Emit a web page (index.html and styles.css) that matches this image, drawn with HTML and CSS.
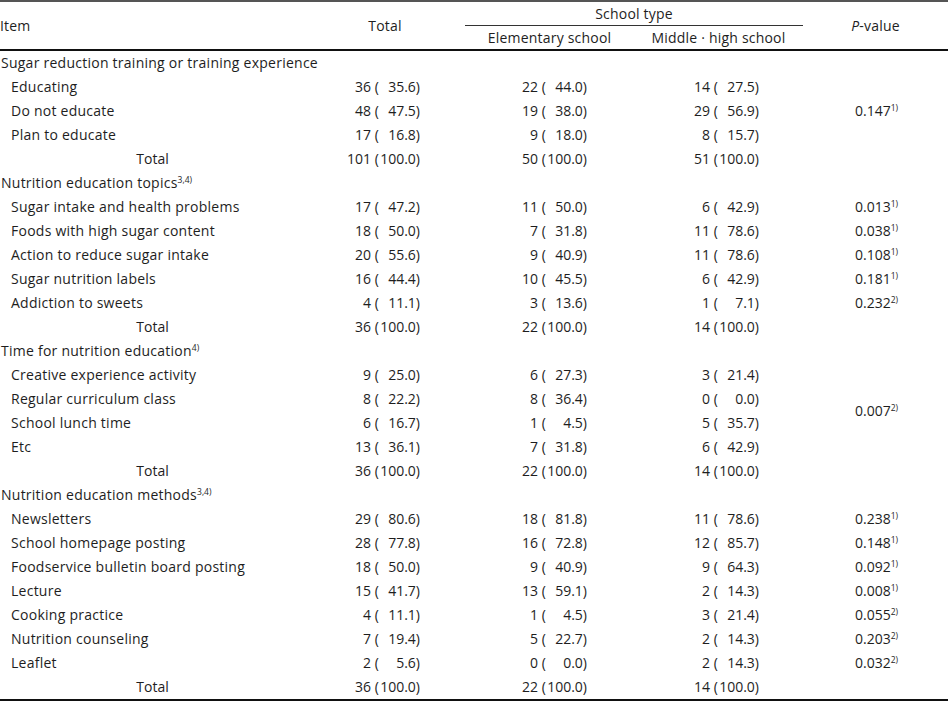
FILE: index.html
```html
<!DOCTYPE html>
<html>
<head>
<meta charset="utf-8">
<link rel="stylesheet" href="styles.css">
</head>
<body>
<table class="tbl">
  <colgroup>
    <col class="c-item"><col class="c-total"><col class="c-elem"><col class="c-mid"><col class="c-p">
  </colgroup>
  <thead>
    <tr class="h1">
      <th rowspan="2" class="th-item">Item</th>
      <th rowspan="2">Total</th>
      <th colspan="2" class="th-group"><span class="group-label">School type</span></th>
      <th rowspan="2"><i>P</i>-value</th>
    </tr>
    <tr class="h2">
      <th>Elementary school</th>
      <th>Middle · high school</th>
    </tr>
  </thead>
  <tbody>
    <tr><td class="sec" colspan="5">Sugar reduction training or training experience</td></tr>
    <tr><td class="it">Educating</td><td class="num">36 (<span class="p">35.6</span>)</td><td class="num">22 (<span class="p">44.0</span>)</td><td class="num">14 (<span class="p">27.5</span>)</td><td class="pv" rowspan="3">0.147<sup>1)</sup></td></tr>
    <tr><td class="it">Do not educate</td><td class="num">48 (<span class="p">47.5</span>)</td><td class="num">19 (<span class="p">38.0</span>)</td><td class="num">29 (<span class="p">56.9</span>)</td></tr>
    <tr><td class="it">Plan to educate</td><td class="num">17 (<span class="p">16.8</span>)</td><td class="num">9 (<span class="p">18.0</span>)</td><td class="num">8 (<span class="p">15.7</span>)</td></tr>
    <tr><td class="tot">Total</td><td class="num">101 (<span class="p">100.0</span>)</td><td class="num">50 (<span class="p">100.0</span>)</td><td class="num">51 (<span class="p">100.0</span>)</td><td></td></tr>

    <tr><td class="sec" colspan="5">Nutrition education topics<sup>3,4)</sup></td></tr>
    <tr><td class="it">Sugar intake and health problems</td><td class="num">17 (<span class="p">47.2</span>)</td><td class="num">11 (<span class="p">50.0</span>)</td><td class="num">6 (<span class="p">42.9</span>)</td><td class="pv">0.013<sup>1)</sup></td></tr>
    <tr><td class="it">Foods with high sugar content</td><td class="num">18 (<span class="p">50.0</span>)</td><td class="num">7 (<span class="p">31.8</span>)</td><td class="num">11 (<span class="p">78.6</span>)</td><td class="pv">0.038<sup>1)</sup></td></tr>
    <tr><td class="it">Action to reduce sugar intake</td><td class="num">20 (<span class="p">55.6</span>)</td><td class="num">9 (<span class="p">40.9</span>)</td><td class="num">11 (<span class="p">78.6</span>)</td><td class="pv">0.108<sup>1)</sup></td></tr>
    <tr><td class="it">Sugar nutrition labels</td><td class="num">16 (<span class="p">44.4</span>)</td><td class="num">10 (<span class="p">45.5</span>)</td><td class="num">6 (<span class="p">42.9</span>)</td><td class="pv">0.181<sup>1)</sup></td></tr>
    <tr><td class="it">Addiction to sweets</td><td class="num">4 (<span class="p">11.1</span>)</td><td class="num">3 (<span class="p">13.6</span>)</td><td class="num">1 (<span class="p">7.1</span>)</td><td class="pv">0.232<sup>2)</sup></td></tr>
    <tr><td class="tot">Total</td><td class="num">36 (<span class="p">100.0</span>)</td><td class="num">22 (<span class="p">100.0</span>)</td><td class="num">14 (<span class="p">100.0</span>)</td><td></td></tr>

    <tr><td class="sec" colspan="5">Time for nutrition education<sup>4)</sup></td></tr>
    <tr><td class="it">Creative experience activity</td><td class="num">9 (<span class="p">25.0</span>)</td><td class="num">6 (<span class="p">27.3</span>)</td><td class="num">3 (<span class="p">21.4</span>)</td><td class="pv" rowspan="4">0.007<sup>2)</sup></td></tr>
    <tr><td class="it">Regular curriculum class</td><td class="num">8 (<span class="p">22.2</span>)</td><td class="num">8 (<span class="p">36.4</span>)</td><td class="num">0 (<span class="p">0.0</span>)</td></tr>
    <tr><td class="it">School lunch time</td><td class="num">6 (<span class="p">16.7</span>)</td><td class="num">1 (<span class="p">4.5</span>)</td><td class="num">5 (<span class="p">35.7</span>)</td></tr>
    <tr><td class="it">Etc</td><td class="num">13 (<span class="p">36.1</span>)</td><td class="num">7 (<span class="p">31.8</span>)</td><td class="num">6 (<span class="p">42.9</span>)</td></tr>
    <tr><td class="tot">Total</td><td class="num">36 (<span class="p">100.0</span>)</td><td class="num">22 (<span class="p">100.0</span>)</td><td class="num">14 (<span class="p">100.0</span>)</td><td></td></tr>

    <tr><td class="sec" colspan="5">Nutrition education methods<sup>3,4)</sup></td></tr>
    <tr><td class="it">Newsletters</td><td class="num">29 (<span class="p">80.6</span>)</td><td class="num">18 (<span class="p">81.8</span>)</td><td class="num">11 (<span class="p">78.6</span>)</td><td class="pv">0.238<sup>1)</sup></td></tr>
    <tr><td class="it">School homepage posting</td><td class="num">28 (<span class="p">77.8</span>)</td><td class="num">16 (<span class="p">72.8</span>)</td><td class="num">12 (<span class="p">85.7</span>)</td><td class="pv">0.148<sup>1)</sup></td></tr>
    <tr><td class="it">Foodservice bulletin board posting</td><td class="num">18 (<span class="p">50.0</span>)</td><td class="num">9 (<span class="p">40.9</span>)</td><td class="num">9 (<span class="p">64.3</span>)</td><td class="pv">0.092<sup>1)</sup></td></tr>
    <tr><td class="it">Lecture</td><td class="num">15 (<span class="p">41.7</span>)</td><td class="num">13 (<span class="p">59.1</span>)</td><td class="num">2 (<span class="p">14.3</span>)</td><td class="pv">0.008<sup>1)</sup></td></tr>
    <tr><td class="it">Cooking practice</td><td class="num">4 (<span class="p">11.1</span>)</td><td class="num">1 (<span class="p">4.5</span>)</td><td class="num">3 (<span class="p">21.4</span>)</td><td class="pv">0.055<sup>2)</sup></td></tr>
    <tr><td class="it">Nutrition counseling</td><td class="num">7 (<span class="p">19.4</span>)</td><td class="num">5 (<span class="p">22.7</span>)</td><td class="num">2 (<span class="p">14.3</span>)</td><td class="pv">0.203<sup>2)</sup></td></tr>
    <tr><td class="it">Leaflet</td><td class="num">2 (<span class="p">5.6</span>)</td><td class="num">0 (<span class="p">0.0</span>)</td><td class="num">2 (<span class="p">14.3</span>)</td><td class="pv">0.032<sup>2)</sup></td></tr>
    <tr class="last"><td class="tot">Total</td><td class="num">36 (<span class="p">100.0</span>)</td><td class="num">22 (<span class="p">100.0</span>)</td><td class="num">14 (<span class="p">100.0</span>)</td><td></td></tr>
  </tbody>
</table>
</body>
</html>
```

FILE: styles.css
```css
html, body {
  margin: 0;
  padding: 0;
  background: #fff;
}

body {
  font-family: "Open Sans", "Liberation Sans", Arial, sans-serif;
  font-size: 14px;
  color: #1e1e1e;
}

.tbl {
  width: 948px;
  border-collapse: collapse;
  table-layout: fixed;
  border-top: 2px solid #555;
  border-bottom: 2px solid #111;
}

.c-item { width: 305px; }
.c-total { width: 160px; }
.c-elem { width: 169px; }
.c-mid { width: 169px; }
.c-p { width: 145px; }

th {
  font-weight: normal;
  text-align: center;
  padding: 0;
  height: 23px;
  line-height: 23px;
  letter-spacing: 0.2px;
}

thead {
  border-bottom: 2px solid #111;
}

.th-item {
  text-align: left;
  padding-left: 0;
}

.group-label {
  display: block;
}

tr.h1 .th-group {
  border-bottom: 1px solid #333;
}

td {
  padding: 0;
  height: 24px;
  line-height: 24px;
  white-space: nowrap;
}

.sec {
  padding-left: 1px;
  letter-spacing: 0.25px;
}

.it {
  padding-left: 11px;
  letter-spacing: 0.25px;
}

.tot {
  text-align: center;
}

.num {
  text-align: right;
}

.tbl td.num:nth-child(2) { padding-right: 45px; }
.tbl td.num:nth-child(3) { padding-right: 47px; }
.tbl td.num:nth-child(4) { padding-right: 44px; }

.p {
  display: inline-block;
  width: 37px;
  text-align: right;
}

.pv {
  text-align: center;
  padding-left: 2px;
}

sup {
  font-size: 8.5px;
  line-height: 0;
  vertical-align: 5px;
  letter-spacing: 0;
}
```
